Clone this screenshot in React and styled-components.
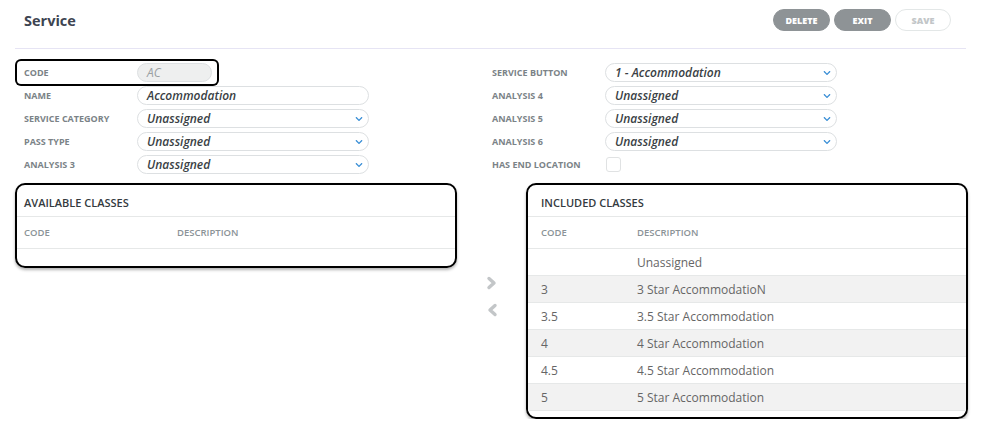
import React from 'react'
import styled, { createGlobalStyle } from 'styled-components'
import { FaChevronDown } from 'react-icons/fa'

const GlobalStyle = createGlobalStyle`
	body {
		margin: 0;
		background: #fff;
		font-family: 'Open Sans', 'Liberation Sans', sans-serif;
	}
`

const leftFields = [
	{ label: 'Code', value: 'AC', kind: 'code' },
	{ label: 'Name', value: 'Accommodation', kind: 'text' },
	{ label: 'Service Category', value: 'Unassigned', kind: 'select' },
	{ label: 'Pass Type', value: 'Unassigned', kind: 'select' },
	{ label: 'Analysis 3', value: 'Unassigned', kind: 'select' },
]

const rightFields = [
	{ label: 'Service Button', value: '1 - Accommodation', kind: 'select' },
	{ label: 'Analysis 4', value: 'Unassigned', kind: 'select' },
	{ label: 'Analysis 5', value: 'Unassigned', kind: 'select' },
	{ label: 'Analysis 6', value: 'Unassigned', kind: 'select' },
	{ label: 'Has End Location', kind: 'check' },
]

const included = [
	['', 'Unassigned'],
	['3', '3 Star AccommodatioN'],
	['3.5', '3.5 Star Accommodation'],
	['4', '4 Star Accommodation'],
	['4.5', '4.5 Star Accommodation'],
	['5', '5 Star Accommodation'],
]

const Chevron = ({ dir }) => (
	<svg width='12' height='14' viewBox='0 0 12 14'>
		<polyline
			points={dir === 'right' ? '3,2.5 8,7 3,11.5' : '9,2.5 4,7 9,11.5'}
			fill='none'
			stroke='currentColor'
			strokeWidth='3.4'
			strokeLinecap='round'
			strokeLinejoin='round'
		/>
	</svg>
)

const Field = ({ f }) => (
	<Row $highlight={f.kind === 'code'}>
		<Label>{f.label}</Label>
		{f.kind === 'check' && <Check />}
		{f.kind === 'code' && <CodeInput>{f.value}</CodeInput>}
		{f.kind === 'text' && <Input>{f.value}</Input>}
		{f.kind === 'select' && (
			<Input>
				{f.value}
				<Caret>
					<FaChevronDown size={8} />
				</Caret>
			</Input>
		)}
	</Row>
)

const ClassTable = ({ title, rows, codeWidth, inset }) => (
	<Card $empty={rows.length === 0}>
		<CardTitle $inset={inset}>{title}</CardTitle>
		<HeadRow $inset={inset}>
			<CodeCell $w={codeWidth}>Code</CodeCell>
			<div>Description</div>
		</HeadRow>
		{rows.map(([code, desc], i) => (
			<DataRow key={i} $inset={inset} $shaded={i % 2 === 1}>
				<CodeCell $w={codeWidth}>{code}</CodeCell>
				<div>{desc}</div>
			</DataRow>
		))}
	</Card>
)

export default function App() {
	return (
		<Page>
			<GlobalStyle />
			<Header>
				<Title>Service</Title>
				<Buttons>
					<Button>Delete</Button>
					<Button>Exit</Button>
					<Button $ghost>Save</Button>
				</Buttons>
			</Header>
			<Form>
				<Column>
					{leftFields.map(f => (
						<Field key={f.label} f={f} />
					))}
				</Column>
				<Column>
					{rightFields.map(f => (
						<Field key={f.label} f={f} />
					))}
				</Column>
			</Form>
			<Tables>
				<ClassTable title='Available Classes' rows={[]} codeWidth={153} inset={7} />
				<Arrows>
					<Chevron dir='right' />
					<Chevron dir='left' />
				</Arrows>
				<ClassTable title='Included Classes' rows={included} codeWidth={96} inset={13} />
			</Tables>
		</Page>
	)
}

const Page = styled.div`
	width: 953px;
	padding: 0 0 0 15px;
`

const Header = styled.div`
	display: flex;
	align-items: center;
	justify-content: space-between;
	width: 951px;
	height: 40px;
	padding-bottom: 8px;
	border-bottom: 1px solid #e6e4f4;
	margin-bottom: 12px;
`

const Title = styled.h1`
	margin: 0 0 0 9px;
	font-size: 14.5px;
	font-weight: 700;
	color: #3d4451;
`

const Buttons = styled.div`
	display: flex;
	gap: 4px;
	margin-right: 15px;
`

const Button = styled.button`
	width: ${p => (p.$ghost ? 56 : 57)}px;
	height: 22px;
	border-radius: 11px;
	border: 1px solid ${p => (p.$ghost ? '#e3e7e7' : '#8e9396')};
	background: ${p => (p.$ghost ? '#fff' : '#8e9396')};
	color: ${p => (p.$ghost ? '#c2c6c8' : '#fff')};
	font-family: 'Open Sans', sans-serif;
	font-size: 9px;
	font-weight: 800;
	text-transform: uppercase;
	padding: 0;
`

const Form = styled.div`
	display: grid;
	grid-template-columns: 468px 468px;
`

const Column = styled.div`
	display: flex;
	flex-direction: column;
`

const Row = styled.div`
	display: flex;
	align-items: center;
	height: 23px;
	width: ${p => (p.$highlight ? '193px' : 'auto')};
	margin-left: ${p => (p.$highlight ? '2px' : '0')};
	padding-left: ${p => (p.$highlight ? '7px' : '9px')};
	border-radius: 4px;
	box-shadow: ${p => (p.$highlight ? '0 0 0 2px #000' : 'none')};
`

const Label = styled.div`
	width: 113px;
	font-size: 9px;
	font-weight: 700;
	color: #7b8387;
	text-transform: uppercase;
`

const Input = styled.div`
	position: relative;
	box-sizing: border-box;
	width: 232px;
	height: 19px;
	line-height: 17px;
	border: 1px solid #dde0e2;
	border-radius: 10px;
	padding-left: 9px;
	font-size: 12px;
	font-weight: 600;
	font-style: italic;
	color: #3a3f45;
`

const CodeInput = styled(Input)`
	width: 75px;
	background: #eeefef;
	color: #9aa0a3;
	font-weight: 500;
`

const Caret = styled.span`
	position: absolute;
	right: 5px;
	top: 0;
	display: flex;
	align-items: center;
	height: 17px;
	color: #3a8fd6;
`

const Check = styled.div`
	width: 15px;
	height: 15px;
	box-sizing: border-box;
	border: 1px solid #e0e2e3;
	border-radius: 3px;
	margin-left: 1px;
`

const Tables = styled.div`
	display: flex;
	align-items: flex-start;
	margin-top: 7px;
`

const Card = styled.div`
	box-sizing: border-box;
	width: 442px;
	border: 2px solid #000;
	border-radius: 10px;
	box-shadow: 0 2px 3px rgba(0, 0, 0, 0.3);
	padding-bottom: ${p => (p.$empty ? '17px' : '6px')};
`

const CardTitle = styled.div`
	height: 31px;
	line-height: 36px;
	padding-left: ${p => p.$inset}px;
	border-bottom: 1px solid #e6e8e8;
	font-size: 11px;
	font-weight: 600;
	color: #343a3e;
	text-transform: uppercase;
`

const HeadRow = styled.div`
	display: flex;
	align-items: center;
	height: 31px;
	padding-left: ${p => p.$inset}px;
	border-bottom: 1px solid #e6e8e8;
	font-size: 9.5px;
	font-weight: 600;
	color: #8b9397;
	text-transform: uppercase;
`

const DataRow = styled.div`
	display: flex;
	align-items: center;
	height: 26px;
	padding-left: ${p => p.$inset}px;
	border-bottom: 1px solid #e6e8e8;
	background: ${p => (p.$shaded ? '#f2f2f2' : '#fff')};
	font-size: 12px;
	color: #666;
`

const CodeCell = styled.div`
	width: ${p => p.$w}px;
`

const Arrows = styled.div`
	display: flex;
	flex-direction: column;
	align-items: center;
	gap: 13px;
	width: 69px;
	padding-top: 93px;
	color: #c3c6c8;
`
